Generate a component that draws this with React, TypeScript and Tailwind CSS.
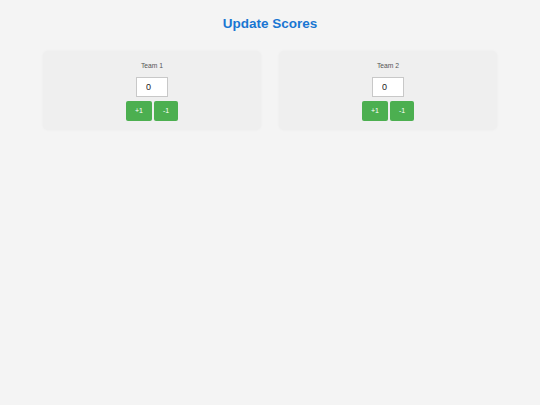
const teams = ["Team 1", "Team 2"];

function TeamCard({ name }: { name: string }) {
  return (
    <div className="flex flex-1 flex-col items-center rounded-[5px] bg-[#efefef] pt-[10px] pb-[9px] shadow-[0_0_3px_rgba(0,0,0,0.04)]">
      <div className="text-[6.75px] leading-[10px] text-[#555]">{name}</div>
      <input
        type="text"
        readOnly
        value="0"
        className="mt-[6px] h-[20px] w-[32px] border border-[#c8c8c8] bg-white pl-[9px] text-left text-[9px] text-[#222] outline-none"
      />
      <div className="mt-[4px] flex gap-[2px]">
        <button className="h-[20px] w-[26px] rounded-[2px] bg-[#4caf50] text-[7px] text-white">+1</button>
        <button className="h-[20px] w-[24px] rounded-[2px] bg-[#4caf50] text-[7px] text-white">-1</button>
      </div>
    </div>
  );
}

export default function App() {
  return (
    <div className="min-h-screen bg-[#f4f4f4] px-[43px] pt-[15px] font-['Liberation_Sans',Arial,sans-serif]">
      <h1 className="text-center text-[13.5px] font-bold leading-[18px] text-[#1976d2]">Update Scores</h1>
      <div className="mt-[18px] flex gap-[18px]">
        {teams.map((team) => (
          <TeamCard key={team} name={team} />
        ))}
      </div>
    </div>
  );
}
